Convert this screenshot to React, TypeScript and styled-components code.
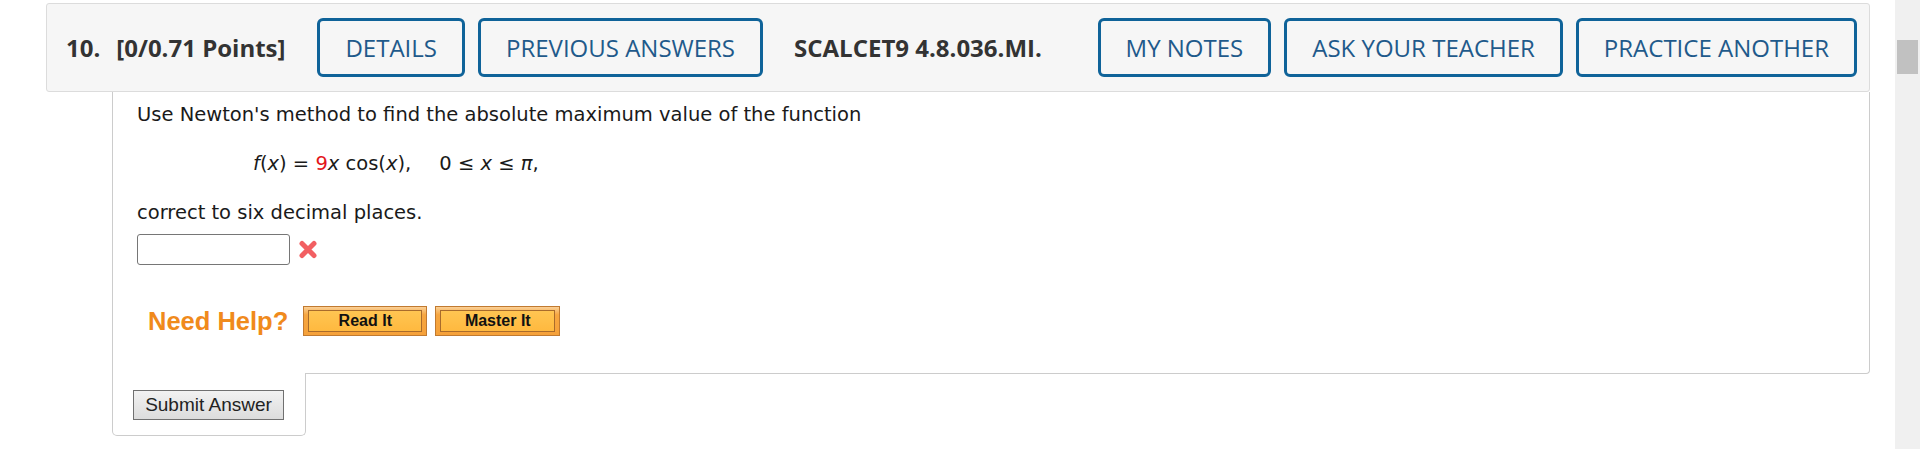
import styled, { createGlobalStyle } from 'styled-components';

const GlobalStyle = createGlobalStyle`
  html, body {
    margin: 0;
    padding: 0;
    background: #fff;
    overflow: hidden;
  }
  * {
    box-sizing: border-box;
  }
`;

const Page = styled.div`
  display: flex;
  height: 100vh;
`;

const Main = styled.div`
  flex: 1;
  padding: 3px 25px 0 46px;
`;

const Header = styled.div`
  display: flex;
  align-items: center;
  height: 89px;
  padding: 0 12px 0 19px;
  background: #f6f6f6;
  border: 1px solid #dcdcdc;
  border-radius: 3px;
  font-family: 'Open Sans', sans-serif;
  font-size: 24px;
  color: #333;
`;

const Number = styled.span`
  font-weight: 700;
  margin-right: 16px;
`;

const Label = styled.span<{ $gap?: number }>`
  font-weight: 700;
  margin-right: ${(p) => p.$gap ?? 32}px;
  white-space: nowrap;
`;

const ButtonGroup = styled.div<{ $right?: boolean }>`
  display: flex;
  gap: 13px;
  margin-left: ${(p) => (p.$right ? 'auto' : '0')};
  margin-right: ${(p) => (p.$right ? '0' : '31px')};
`;

const HeaderButton = styled.button`
  height: 59px;
  padding: 0 25px;
  border: 3px solid #0f6399;
  border-radius: 6px;
  background: transparent;
  color: #1f5a8b;
  font-family: 'Open Sans', sans-serif;
  font-size: 24px;
  text-transform: uppercase;
  white-space: nowrap;
  cursor: pointer;
`;

const Panel = styled.div`
  margin-left: 66px;
  padding: 10px 24px 37px;
  border: 1px solid #cccccc;
  border-top: none;
  border-bottom-right-radius: 4px;
  font-family: 'DejaVu Sans', Verdana, sans-serif;
  font-size: 19.5px;
  color: #1a1a1a;
`;

const Line = styled.p<{ $indent?: number; $top?: number }>`
  margin: ${(p) => p.$top ?? 0}px 0 0;
  padding-left: ${(p) => p.$indent ?? 0}px;
  line-height: 26px;
`;

const Var = styled.i`
  font-style: italic;
`;

const Coef = styled.span`
  color: #e3161b;
`;

const Spacer = styled.span`
  display: inline-block;
  width: 28px;
`;

const AnswerRow = styled.div`
  display: flex;
  align-items: center;
  gap: 8px;
  margin-top: 8px;
`;

const AnswerInput = styled.input`
  width: 153px;
  height: 31px;
  border: 1px solid #767676;
  border-radius: 3px;
  background: #fff;
`;

const HelpRow = styled.div`
  display: flex;
  align-items: center;
  margin: 41px 0 0 11px;
`;

const HelpLabel = styled.span`
  font-family: 'Liberation Sans', Arial, sans-serif;
  font-weight: 700;
  font-size: 25.5px;
  color: #f08a1c;
  margin-right: 15px;
`;

const HelpButton = styled.button<{ $width: number }>`
  width: ${(p) => p.$width}px;
  height: 30px;
  margin-right: 8px;
  padding: 3px 4px;
  border: 1px solid #c17a30;
  background: linear-gradient(#fbd096 0%, #f6a640 28%, #f5a13a 100%);
  cursor: pointer;
`;

const HelpInner = styled.span`
  display: flex;
  align-items: center;
  justify-content: center;
  height: 100%;
  border: 1px solid #a96b2b;
  background: linear-gradient(#ffc552, #ffb93f);
  font-family: 'Liberation Sans', Arial, sans-serif;
  font-weight: 700;
  font-size: 16px;
  color: #111;
`;

const Footer = styled.div`
  position: relative;
  width: 194px;
  margin: -1px 0 0 66px;
  padding: 17px 0 15px 20px;
  background: #fff;
  border: 1px solid #cccccc;
  border-top: none;
  border-radius: 0 0 5px 5px;
`;

const SubmitButton = styled.button`
  display: block;
  width: 151px;
  height: 30px;
  padding: 0;
  border: 1px solid #707070;
  border-radius: 0;
  background: linear-gradient(#f2f2f2, #dcdcdc);
  font-family: 'Liberation Sans', Arial, sans-serif;
  font-size: 19px;
  color: #222;
  cursor: pointer;
`;

const ScrollTrack = styled.div`
  width: 25px;
  background: #f0f0f0;
  padding: 40px 2px 0;
`;

const ScrollThumb = styled.div`
  height: 34px;
  background: #c1c1c1;
`;

const WrongMark = () => (
  <svg width="20" height="19" viewBox="0 0 20 19">
    <path
      d="M4 3.5 L16 15.5 M16 3.5 L4 15.5"
      stroke="#f25f62"
      strokeWidth="5"
      strokeLinecap="round"
    />
  </svg>
);

export default function App() {
  return (
    <>
      <GlobalStyle />
      <Page>
        <Main>
          <Header>
            <Number>10.</Number>
            <Label>[0/0.71 Points]</Label>
            <ButtonGroup>
              <HeaderButton>Details</HeaderButton>
              <HeaderButton>Previous Answers</HeaderButton>
            </ButtonGroup>
            <Label $gap={0}>SCALCET9 4.8.036.MI.</Label>
            <ButtonGroup $right>
              <HeaderButton>My Notes</HeaderButton>
              <HeaderButton>Ask Your Teacher</HeaderButton>
              <HeaderButton>Practice Another</HeaderButton>
            </ButtonGroup>
          </Header>

          <Panel>
            <Line>Use Newton's method to find the absolute maximum value of the function</Line>
            <Line $indent={116} $top={23}>
              <Var>f</Var>(<Var>x</Var>) = <Coef>9</Coef>
              <Var>x</Var> cos(<Var>x</Var>),
              <Spacer />0 ≤ <Var>x</Var> ≤ <Var>π</Var>,
            </Line>
            <Line $top={23}>correct to six decimal places.</Line>
            <AnswerRow>
              <AnswerInput type="text" />
              <WrongMark />
            </AnswerRow>
            <HelpRow>
              <HelpLabel>Need Help?</HelpLabel>
              <HelpButton $width={124}>
                <HelpInner>Read It</HelpInner>
              </HelpButton>
              <HelpButton $width={125}>
                <HelpInner>Master It</HelpInner>
              </HelpButton>
            </HelpRow>
          </Panel>

          <Footer>
            <SubmitButton>Submit Answer</SubmitButton>
          </Footer>
        </Main>
        <ScrollTrack>
          <ScrollThumb />
        </ScrollTrack>
      </Page>
    </>
  );
}
